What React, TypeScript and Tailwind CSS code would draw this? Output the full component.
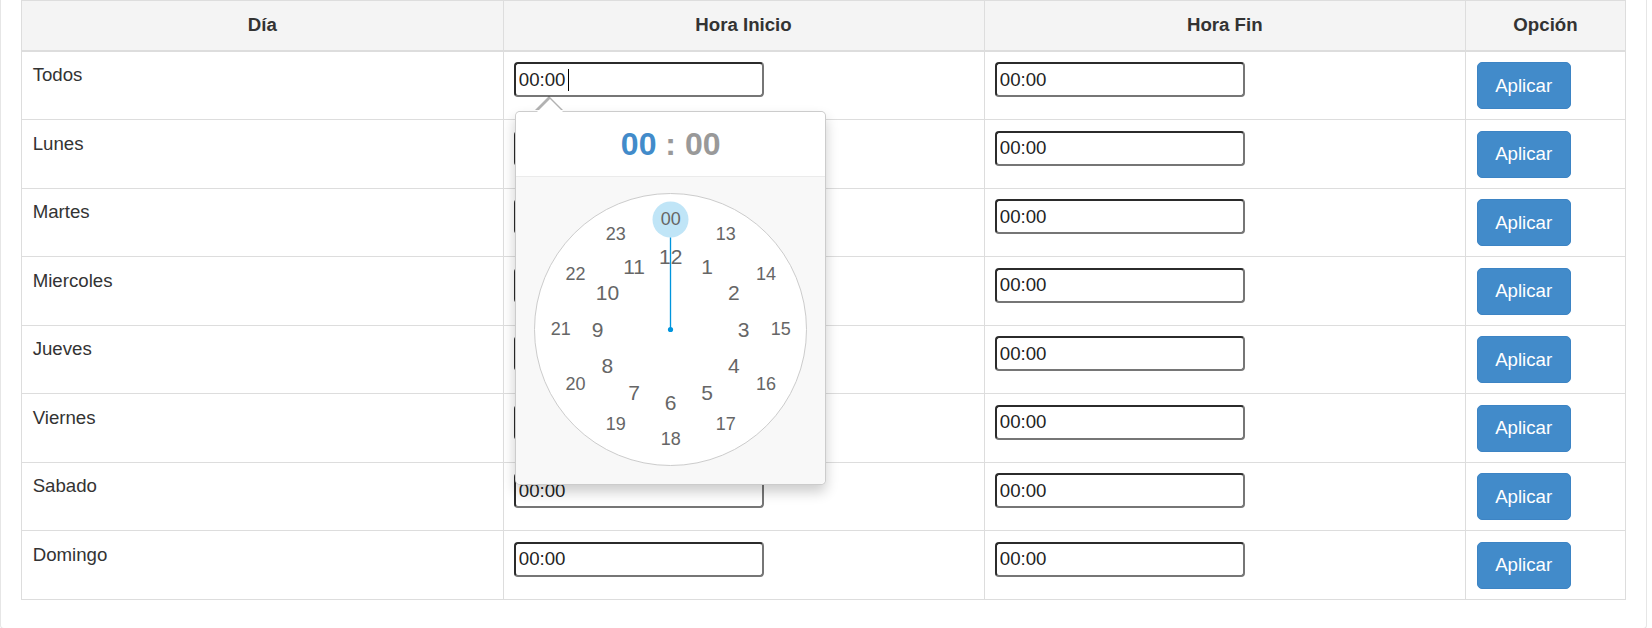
import React from 'react';

const days = ['Todos', 'Lunes', 'Martes', 'Miercoles', 'Jueves', 'Viernes', 'Sabado', 'Domingo'];

function TimeInput({ caret }: { caret?: boolean }) {
    return (
        <div className="relative w-[250px]">
            <input
                type="text"
                defaultValue="00:00"
                readOnly
                className="block h-[35px] w-[250px] rounded-[4px] border-2 border-t-[#2b2b2b] border-l-[#2b2b2b] border-r-[#767676] border-b-[#767676] bg-white px-[2.67px] text-[18.67px] text-[#222] outline-none"
            />
            {caret && <span className="absolute left-[54px] top-[7px] h-[22px] w-px bg-black"></span>}
        </div>
    );
}

function ClockFace() {
    const c = 136.5;
    const ticks = Array.from({ length: 24 }, (_, h) => {
        const inner = h > 0 && h < 13;
        const r = inner ? 73 : 110;
        const a = ((h % 12) / 6) * Math.PI;
        return {
            label: h === 0 ? '00' : String(h),
            inner,
            x: c + Math.sin(a) * r,
            y: c - Math.cos(a) * r,
        };
    });

    return (
        <div className="relative h-[273px] w-[273px] rounded-full border border-[#ccc] bg-white">
            {/* hand + selected bubble */}
            <svg className="absolute -left-px -top-px" width="273" height="273" viewBox="0 0 273 273">
                <circle cx={c} cy={c - 110} r="18" fill="#c0e5f7" />
                <line x1={c} y1={c} x2={c} y2={c - 92} stroke="#0095dd" strokeWidth="1.33" />
                <circle cx={c} cy={c} r="2.6" fill="#0095dd" />
            </svg>
            {ticks.map((t) => (
                <div
                    key={t.label}
                    className={`absolute -ml-[19px] -mt-[19px] flex h-9 w-9 items-center justify-center text-[#666] ${t.inner ? 'text-[21px]' : 'text-[18px]'}`}
                    style={{ left: t.x, top: t.y }}
                >
                    {t.label}
                </div>
            ))}
        </div>
    );
}

function ClockPopover() {
    return (
        <div className="absolute left-px top-[48.7px] z-10 w-[311px] rounded-[5px] border border-black/20 bg-white shadow-[0_7px_13px_rgba(0,0,0,0.2)]">
            {/* Arrow */}
            <div className="absolute -top-[15.67px] left-[19.3px] h-0 w-0 border-x-[14.67px] border-b-[14.67px] border-x-transparent border-b-black/30"></div>
            <div className="absolute -top-[13.33px] left-[20.67px] h-0 w-0 border-x-[13.33px] border-b-[13.33px] border-x-transparent border-b-white"></div>

            <div className="rounded-t-[5px] border-b border-[#ebebeb] bg-white py-[10.67px] text-center text-[32px] font-bold leading-[43px] text-[#999]">
                <span className="text-[#428bca]">00</span> : <span>00</span>
            </div>
            <div className="rounded-b-[5px] bg-[#f8f8f8] px-[18px] pb-[18px] pt-4">
                <ClockFace />
            </div>
        </div>
    );
}

export default function App() {
    return (
        <div className="h-[628px] overflow-hidden bg-white font-['Liberation_Sans',Arial,sans-serif] text-[18.67px] text-[#333]">
            <div className="w-[1647px] rounded-b-[4px] border border-t-0 border-[#e6e6e6] bg-white px-5 pb-[28px]">
                <table className="w-[1604px] table-fixed border-collapse">
                    <thead>
                        <tr className="bg-[#f4f4f4]">
                            <th className="w-[481.5px] border border-b-2 border-[#ddd] px-[10.67px] py-[11px] text-center font-bold leading-[26.67px]">Día</th>
                            <th className="w-[481px] border border-b-2 border-[#ddd] px-[10.67px] py-[11px] text-center font-bold leading-[26.67px]">Hora Inicio</th>
                            <th className="w-[481.5px] border border-b-2 border-[#ddd] px-[10.67px] py-[11px] text-center font-bold leading-[26.67px]">Hora Fin</th>
                            <th className="w-[160px] border border-b-2 border-[#ddd] px-[10.67px] py-[11px] text-center font-bold leading-[26.67px]">Opción</th>
                        </tr>
                    </thead>
                    <tbody>
                        {days.map((day, i) => (
                            <tr key={day}>
                                <td className="border border-[#ddd] px-[10.67px] pb-[10px] pt-[10.5px] align-top leading-[26.67px]">{day}</td>
                                <td className="border border-[#ddd] px-[10.67px] pb-[10px] pt-[10.5px] align-top">
                                    <div className="relative">
                                        <TimeInput caret={i === 0} />
                                        {i === 0 && <ClockPopover />}
                                    </div>
                                </td>
                                <td className="border border-[#ddd] px-[10.67px] pb-[10px] pt-[10.5px] align-top">
                                    <TimeInput />
                                </td>
                                <td className="border border-[#ddd] px-[10.67px] pb-[10px] pt-[10.5px] align-top">
                                    <button className="h-[47px] w-[94px] rounded-[5px] border border-[#3d84c4] bg-[#428bca] text-[18.67px] text-white">
                                        Aplicar
                                    </button>
                                </td>
                            </tr>
                        ))}
                    </tbody>
                </table>
            </div>
        </div>
    );
}
